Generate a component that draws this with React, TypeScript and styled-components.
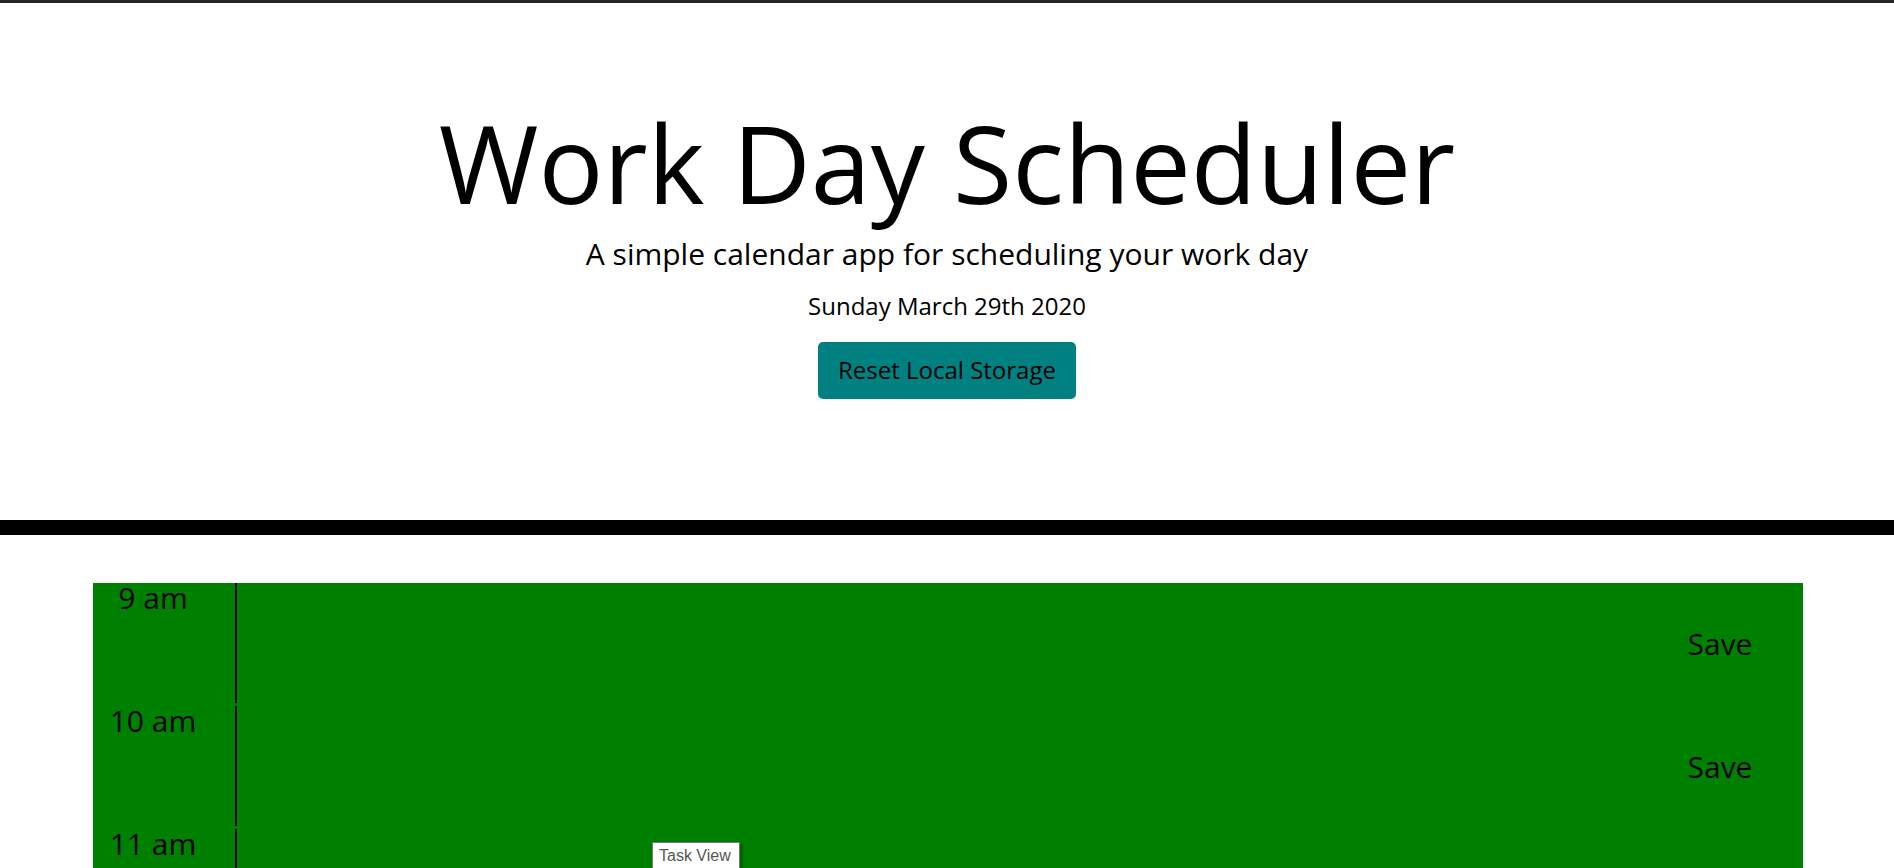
import styled, { createGlobalStyle } from "styled-components";

const hours = ["9 am", "10 am", "11 am", "12 pm", "1 pm", "2 pm", "3 pm", "4 pm", "5 pm"];

const GlobalStyle = createGlobalStyle`
    html, body {
        margin: 0;
        padding: 0;
        overflow: hidden;
        background: #ffffff;
        font-family: "Open Sans", "Noto Sans", sans-serif;
        color: #000000;
    }
`;

const Page = styled.div`
    position: relative;
    border-top: 3px solid #272727;
    min-height: 865px;
`;

const Header = styled.header`
    display: flex;
    flex-direction: column;
    align-items: center;
    padding: 95px 0 121px;
    border-bottom: 15px solid #000000;
`;

const Title = styled.h1`
    margin: 0;
    font-size: 108px;
    font-weight: 400;
    line-height: 1.2;
`;

const Lead = styled.p`
    margin: 5px 0 0;
    font-size: 30px;
    line-height: 42px;
`;

const Today = styled.p`
    margin: 14px 0 0;
    font-size: 24px;
    line-height: 33px;
`;

const ResetButton = styled.button`
    margin-top: 20px;
    padding: 10px 20px 11px;
    border: none;
    border-radius: 5px;
    background: #008080;
    color: #000000;
    font-family: inherit;
    font-size: 24px;
    line-height: 36px;
    cursor: pointer;
`;

const Schedule = styled.main`
    margin: 48px 91px 0 93px;
    background: #008000;
`;

const Row = styled.div`
    display: flex;
    height: 120px;
    padding-bottom: 3px;
`;

const Hour = styled.div`
    width: 142px;
    padding-right: 22px;
    box-sizing: border-box;
    text-align: center;
    font-size: 30px;
    line-height: 1;
`;

const Task = styled.textarea`
    flex: 1;
    margin: 0;
    padding: 8px;
    border: none;
    border-left: 2px solid #000000;
    background: transparent;
    resize: none;
    font-family: inherit;
    font-size: 20px;
    outline: none;
`;

const SaveButton = styled.button`
    width: 166px;
    padding: 2px 0 0;
    border: none;
    background: transparent;
    color: #000000;
    font-family: inherit;
    font-size: 30px;
    line-height: 1;
    cursor: pointer;
`;

const Tooltip = styled.div`
    position: absolute;
    left: 652px;
    top: 839px;
    width: 88px;
    height: 32px;
    box-sizing: border-box;
    padding: 2px 0 0 6px;
    background: #ffffff;
    border: 1px solid #767676;
    box-shadow: 2px 2px 3px rgba(0, 0, 0, 0.35);
    color: #575757;
    font-family: "Liberation Sans", Arial, sans-serif;
    font-size: 16px;
    line-height: 22px;
`;

export default function App() {
    return (
        <Page>
            <GlobalStyle/>
            <Header>
                <Title>Work Day Scheduler</Title>
                <Lead>A simple calendar app for scheduling your work day</Lead>
                <Today>Sunday March 29th 2020</Today>
                <ResetButton>Reset Local Storage</ResetButton>
            </Header>
            <Schedule>
                {hours.map((h) => (
                    <Row key={h}>
                        <Hour>{h}</Hour>
                        <Task/>
                        <SaveButton>Save</SaveButton>
                    </Row>
                ))}
            </Schedule>
            <Tooltip>Task View</Tooltip>
        </Page>
    );
}
